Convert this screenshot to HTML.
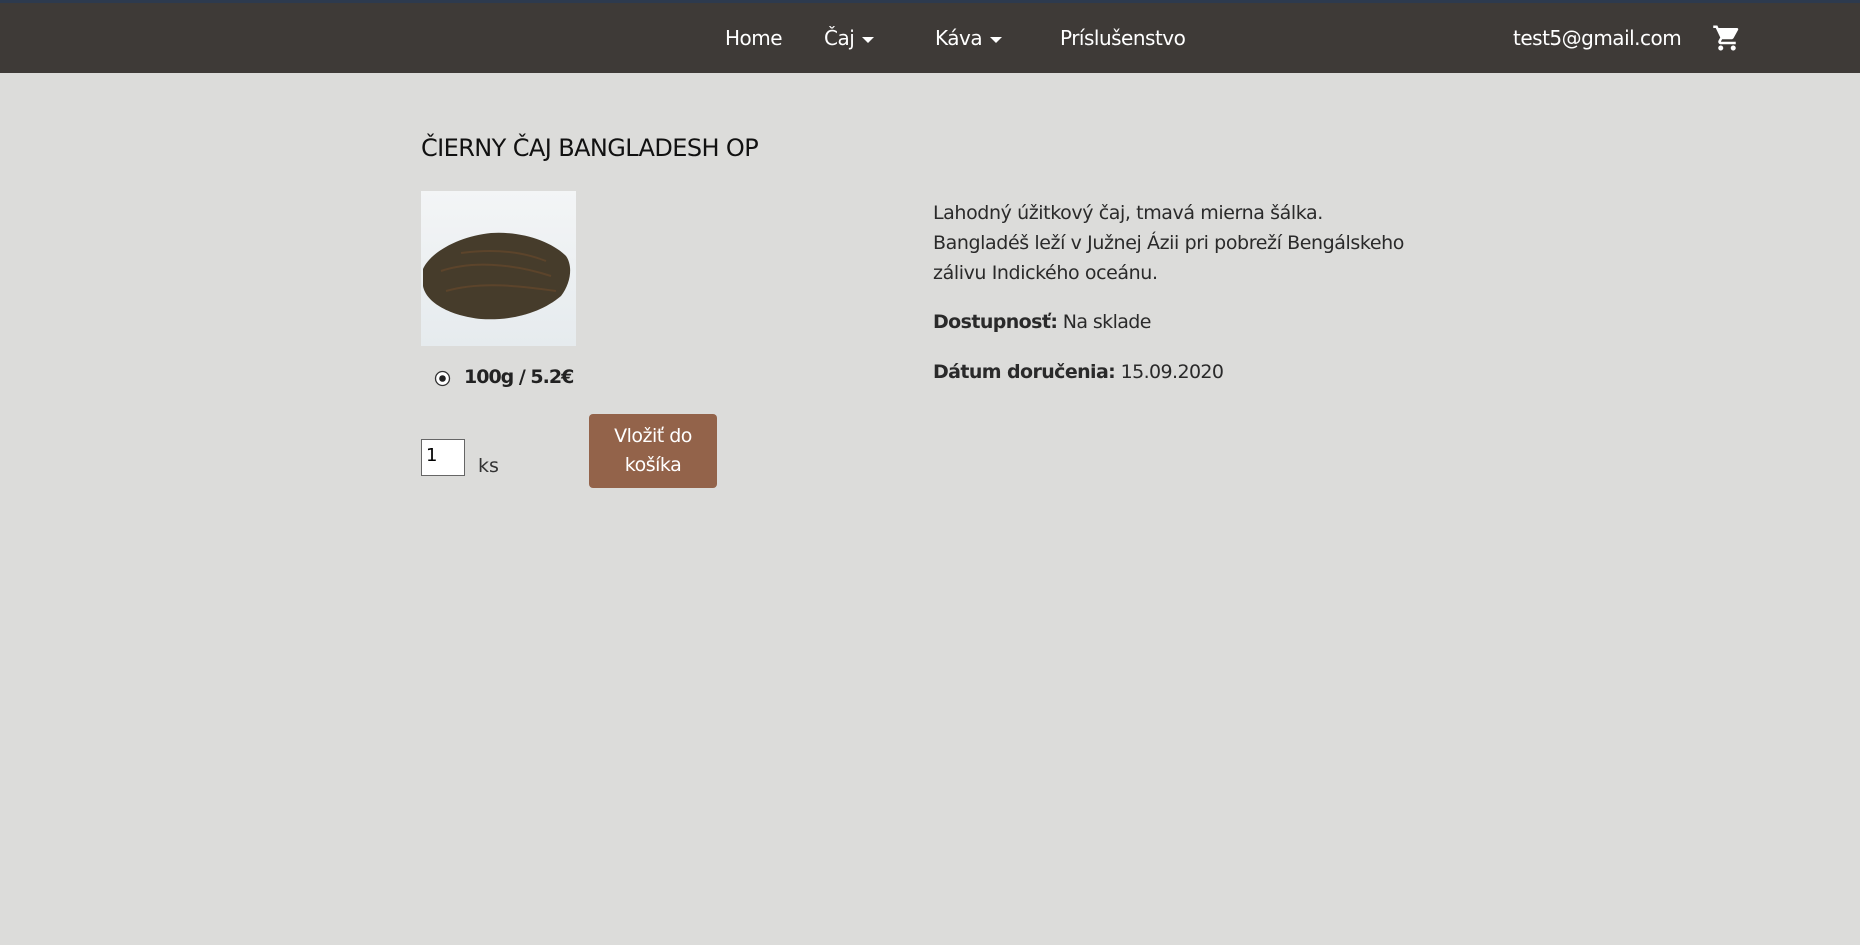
<!DOCTYPE html>
<html><head><meta charset="utf-8"><style>
*{margin:0;padding:0;box-sizing:border-box}
body{width:1860px;height:945px;background:#dcdcda;font-family:"DejaVu Sans","Liberation Sans",sans-serif;color:#2a2a2a;position:relative;overflow:hidden}
.nav{position:absolute;left:0;top:0;width:1860px;height:73px;background:#3e3a37;border-top:3px solid #2d3a4e}
.n{position:absolute;top:23px;color:#fff;font-size:20px;letter-spacing:-0.5px;line-height:24px}
.c{display:inline-block;width:0;height:0;border-left:6px solid transparent;border-right:6px solid transparent;border-top:6px solid #fff;vertical-align:middle;margin-left:8px}
.a{position:absolute}
</style></head><body>
<div class="nav">
<div class="n" style="left:725px">Home</div>
<div class="n" style="left:824px">Čaj<span class="c"></span></div>
<div class="n" style="left:935px">Káva<span class="c"></span></div>
<div class="n" style="left:1060px">Príslušenstvo</div>
<div class="n" style="left:1513px">test5@gmail.com</div>
<svg class="a" style="left:1712px;top:20px" width="30" height="30" viewBox="0 0 24 24"><path fill="#fff" d="M7 18c-1.1 0-2 .9-2 2s.9 2 2 2 2-.9 2-2-.9-2-2-2zM1 2v2h2l3.6 7.59-1.350 2.45c-.16.28-.25.61-.25.96 0 1.1.9 2 2 2h12v-2H7.42c-.14 0-.25-.11-.25-.25l.03-.12.9-1.63h7.45c.75 0 1.410-.41 1.75-1.03l3.58-6.49A1 1 0 0 0 20 4H5.21l-.94-2H1zm16 16c-1.1 0-2 .9-2 2s.9 2 2 2 2-.9 2-2-.9-2-2-2z"/></svg>
</div>
<div class="a" style="left:421px;top:134px;font-size:24px;letter-spacing:-0.6px;color:#111">ČIERNY ČAJ BANGLADESH OP</div>
<div class="a" style="left:421px;top:191px;width:155px;height:155px;background:linear-gradient(#f3f5f6,#e6ebee)">
<svg width="155" height="155"><path d="M2 78 C10 60 40 45 70 42 C100 40 130 50 145 65 C152 75 150 92 140 105 C120 122 90 130 60 128 C30 125 5 112 2 95 Z" fill="#463c2b"/><path d="M20 80 C50 70 90 72 130 85 M25 100 C60 90 100 95 135 100 M40 62 C70 58 100 60 125 70" stroke="#6a4a2c" stroke-width="2" fill="none" opacity=".6"/></svg></div>
<svg class="a" style="left:434px;top:370px" width="17" height="17"><circle cx="8.5" cy="8.5" r="7" fill="#fff" stroke="#333" stroke-width="1.3"/><circle cx="8.5" cy="8.5" r="3.3" fill="#222"/></svg>
<div class="a" style="left:464px;top:366px;font-size:19px;font-weight:bold;letter-spacing:-1px;color:#222">100g / 5.2€</div>
<div class="a" style="left:421px;top:439px;width:44px;height:37px;background:#fff;border:1px solid #666;font-size:18px;padding:5px 4px;color:#000">1</div>
<div class="a" style="left:478px;top:455px;font-size:19px;color:#333">ks</div>
<div class="a" style="left:589px;top:414px;width:128px;height:74px;background:#93634a;border-radius:4px;color:#fff;font-size:19px;text-align:center;line-height:29px;padding-top:8px;letter-spacing:-0.5px">Vložiť do<br>košíka</div>
<div class="a" style="left:933px;top:198px;width:560px;font-size:19px;line-height:30px;letter-spacing:-0.4px;color:#2a2a2a">Lahodný úžitkový čaj, tmavá mierna šálka.<br>Bangladéš leží v Južnej Ázii pri pobreží Bengálskeho<br>zálivu Indického oceánu.</div>
<div class="a" style="left:933px;top:311px;font-size:19px;letter-spacing:-0.6px"><b>Dostupnosť:</b> Na sklade</div>
<div class="a" style="left:933px;top:361px;font-size:19px;letter-spacing:-0.6px"><b>Dátum doručenia:</b> 15.09.2020</div>
</body></html>
